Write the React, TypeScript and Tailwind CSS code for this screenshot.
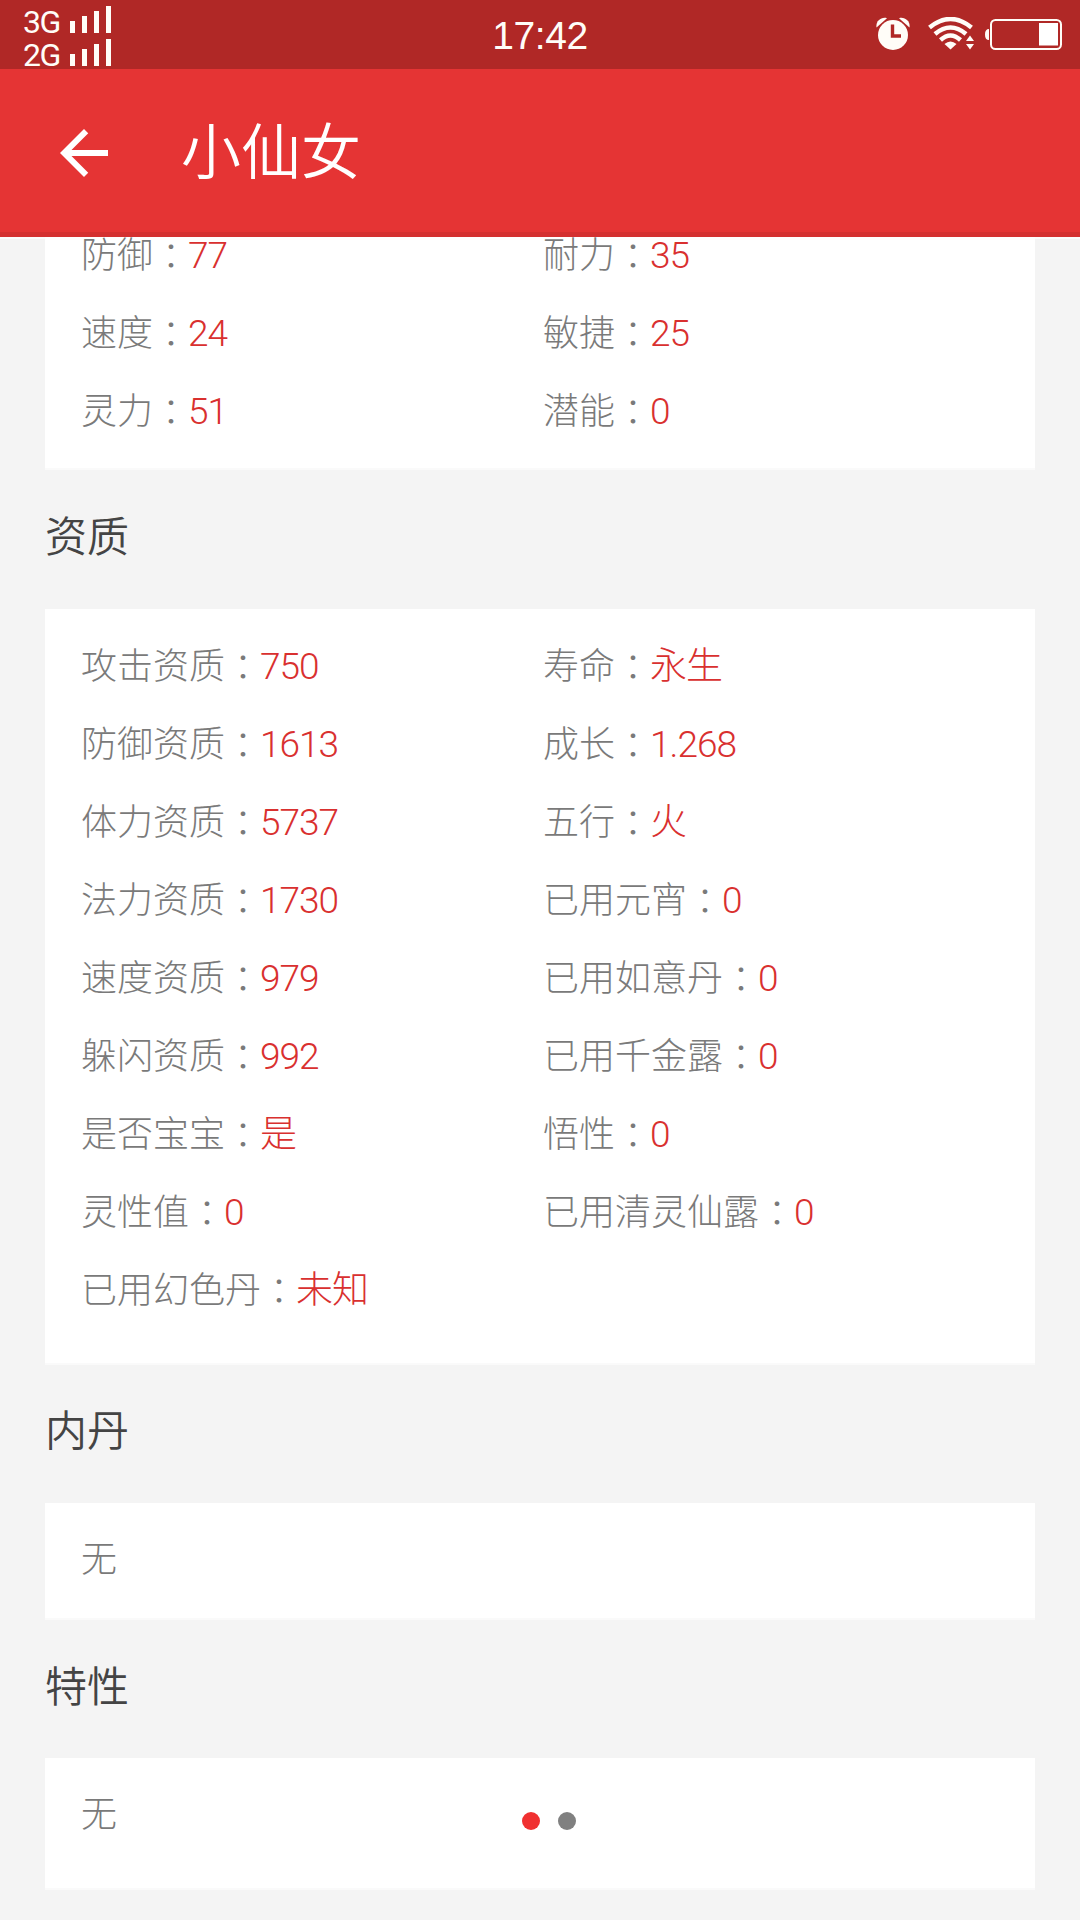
type Stat = { label: string; value: string }

const baseStats: Stat[] = [
  { label: '防御', value: '77' },
  { label: '耐力', value: '35' },
  { label: '速度', value: '24' },
  { label: '敏捷', value: '25' },
  { label: '灵力', value: '51' },
  { label: '潜能', value: '0' },
]

const aptitudes: Stat[] = [
  { label: '攻击资质', value: '750' },
  { label: '寿命', value: '永生' },
  { label: '防御资质', value: '1613' },
  { label: '成长', value: '1.268' },
  { label: '体力资质', value: '5737' },
  { label: '五行', value: '火' },
  { label: '法力资质', value: '1730' },
  { label: '已用元宵', value: '0' },
  { label: '速度资质', value: '979' },
  { label: '已用如意丹', value: '0' },
  { label: '躲闪资质', value: '992' },
  { label: '已用千金露', value: '0' },
  { label: '是否宝宝', value: '是' },
  { label: '悟性', value: '0' },
  { label: '灵性值', value: '0' },
  { label: '已用清灵仙露', value: '0' },
  { label: '已用幻色丹', value: '未知' },
]

const SignalBars = () => (
  <svg width="41" height="27" viewBox="0 0 41 27" fill="#fffdf8">
    <rect x="0" y="15" width="5" height="12" />
    <rect x="12" y="10" width="5" height="17" />
    <rect x="24" y="5" width="5" height="22" />
    <rect x="36" y="0" width="5" height="27" />
  </svg>
)

const AlarmIcon = () => (
  <svg width="34" height="33" viewBox="0 0 34 33" fill="none">
    <path d="M0.500 10.500C-0.500 4.500 5 -0.500 11 1.200Z" fill="#fffdf8" />
    <path d="M33.500 10.500C34.500 4.500 29 -0.500 23 1.200Z" fill="#fffdf8" />
    <circle cx="17" cy="18" r="16" fill="#b02826" />
    <circle cx="17" cy="18" r="15" fill="#fffdf8" />
    <path d="M16.500 7.500V19H25" stroke="#b02826" strokeWidth="3.400" />
  </svg>
)

const WifiIcon = () => (
  <svg width="46" height="33" viewBox="0 0 46 33" fill="none">
    <path d="M1.500 10.500Q22.500 -6.500 43.500 10.500" stroke="#fffdf8" strokeWidth="4.500" />
    <path d="M7 17Q22.500 4 38 17" stroke="#fffdf8" strokeWidth="4.500" />
    <path d="M12.500 23Q22.500 14 32.500 23" stroke="#fffdf8" strokeWidth="4.500" />
    <path d="M16.500 27Q22.500 22 28.500 27L22.500 32.500Z" fill="#fffdf8" />
    <path d="M42 18.500L46 24H38Z" fill="#fffdf8" />
    <path d="M42 32.500L46 27H38Z" fill="#fffdf8" />
  </svg>
)

const BatteryIcon = () => (
  <svg width="77" height="31" viewBox="0 0 77 31" fill="none">
    <path d="M4 10Q0 10 0 15.500T4 21Z" fill="#fffdf8" />
    <rect x="6" y="1" width="70" height="29" rx="4.500" stroke="#fffdf8" strokeWidth="2" />
    <rect x="54" y="4" width="19" height="22.500" fill="#fff" />
  </svg>
)

const StatusBar = () => (
  <div className="flex h-[69px] w-full shrink-0 items-start bg-[#b02826] font-['Liberation_Sans',sans-serif] font-normal text-[#fffdf8]">
    <div className="flex w-[360px] flex-col pt-[6px] pl-[23px] font-[Roboto,sans-serif] text-[32px] leading-[32px] tracking-[-1.5px]">
      <div className="flex h-[33px] items-start">
        <span className="w-[47px]">3G</span>
        <SignalBars />
      </div>
      <div className="flex h-[30px] items-start">
        <span className="w-[47px]">2G</span>
        <SignalBars />
      </div>
    </div>
    <div className="w-[360px] pt-[12px] text-center text-[39px] leading-[48px] tracking-[-0.4px]">17:42</div>
    <div className="flex w-[360px] items-start justify-end pt-[17px] pr-[18px]">
      <AlarmIcon />
      <span className="pl-[18px]">
        <WifiIcon />
      </span>
      <span className="pt-[2px] pl-[11px]">
        <BatteryIcon />
      </span>
    </div>
  </div>
)

const StatItem = ({ label, value }: Stat) => (
  <div className="flex h-[78px] items-center whitespace-nowrap">
    <span className="pb-[4px] text-[#7a7a7a]">{label}</span>
    <span className="-mr-px pb-px font-['Noto_Sans_CJK_TC',sans-serif] text-[#7a7a7a]">：</span>
    <span className="pt-[4px] font-[Roboto,'Noto_Sans_CJK_SC',sans-serif] text-[37px] tracking-[-1px] text-[#d9302f]">
      {value}
    </span>
  </div>
)

const StatGrid = ({ stats }: { stats: Stat[] }) => (
  <div className="grid grid-cols-[462px_1fr]">
    {stats.map((stat) => (
      <StatItem key={stat.label} {...stat} />
    ))}
  </div>
)

const SectionTitle = ({ children }: { children: string }) => (
  <h2 className="text-[42px] leading-[60px] font-[350] text-[#444]">{children}</h2>
)

export default function App() {
  return (
    <div className="flex h-[1920px] w-[1080px] flex-col overflow-hidden bg-[#f4f4f4] font-['Noto_Sans_CJK_SC',sans-serif] font-light">
      <StatusBar />

      {/* App bar */}
      <header className="flex h-[168px] shrink-0 items-center border-b-[5px] border-[#d43030] bg-[#e53434] pl-[48px] text-white">
        <svg width="72" height="72" viewBox="0 0 24 24" fill="currentColor" className="mt-[5px]">
          <path d="M20 11H7.830l5.590-5.590L12 4l-8 8 8 8 1.410-1.410L7.830 13H20v-2z" />
        </svg>
        <h1 className="pb-[5px] pl-[61px] text-[60px] leading-[90px] font-[350]">小仙女</h1>
      </header>

      <main className="relative grow overflow-hidden px-[45px] text-[36px] leading-[54px] shadow-[inset_0_2px_0_#fcfcfc]">
        {/* Scrolled content, the first card runs under the app bar */}
        <section className="-mt-[22px] h-[255px] border-b-2 border-[#fafafa] bg-white px-[36px]">
          <StatGrid stats={baseStats} />
        </section>

        <div className="h-[139px] pt-[34px]">
          <SectionTitle>资质</SectionTitle>
        </div>
        <section className="h-[756px] border-b-2 border-[#fafafa] bg-white px-[36px] pt-[17px]">
          <StatGrid stats={aptitudes} />
        </section>

        <div className="h-[138px] pt-[33px]">
          <SectionTitle>内丹</SectionTitle>
        </div>
        <section className="h-[117px] border-b-2 border-[#fafafa] bg-white px-[36px] pt-[26px] text-[#7a7a7a]">无</section>

        <div className="h-[138px] pt-[34px]">
          <SectionTitle>特性</SectionTitle>
        </div>
        <section className="h-[132px] border-b-2 border-[#fafafa] bg-white px-[36px] pt-[26px] text-[#7a7a7a]">无</section>

        {/* Pager dots over the content */}
        <div className="absolute top-[1575px] left-[522px] flex gap-[18px]">
          <span className="size-[18px] rounded-full bg-[#f03030]" />
          <span className="size-[18px] rounded-full bg-[#808080]" />
        </div>
      </main>
    </div>
  )
}
